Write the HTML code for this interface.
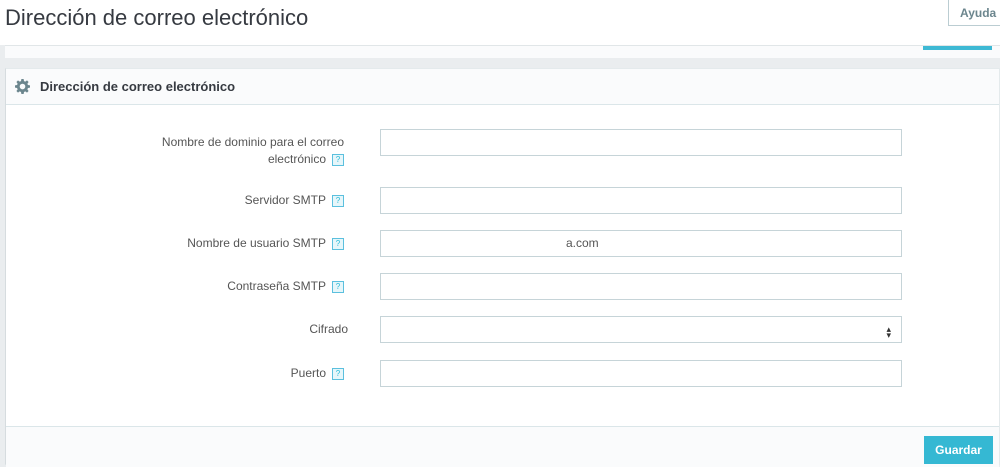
<!DOCTYPE html>
<html><head><meta charset="utf-8"><style>
body{margin:0;width:1000px;height:465px;overflow:hidden;background:#eaedef;font-family:"Liberation Sans",sans-serif;position:relative;color:#555}
.top{position:absolute;left:0;top:0;width:1000px;height:45px;background:#fff}
.title{position:absolute;left:5px;top:5px;font-size:22px;color:#363a41}
.help{position:absolute;left:948px;top:-2px;width:60px;height:28px;border:1px solid #bbcdd2;box-sizing:border-box;background:#fff;font-size:12px;color:#6c868e;line-height:28px;padding-left:11px;font-weight:bold}
.prev{position:absolute;left:5px;top:45px;width:995px;height:13px;background:#fafbfc;border-top:1px solid #e1e6e8;box-sizing:border-box}
.bar{position:absolute;left:923px;top:46px;width:69px;height:4px;background:#3eb9d4}
.panel{position:absolute;left:5px;top:68px;width:995px;height:397px;background:#fff;border:1px solid #e4eaec;border-left-color:#d6dcdf;box-sizing:border-box}
.ph{height:35px;background:#fafbfc;border-bottom:1px solid #dbe6e9;font-size:13px;font-weight:bold;color:#363a41;line-height:36px;padding-left:34px;position:relative}
.gear{position:absolute;left:9px;top:10px}
.foot{position:absolute;left:0;top:357px;width:993px;height:40px;background:#fafbfc;border-top:1px solid #dbe6e9}
.btn{position:absolute;left:918px;top:9px;width:69px;height:28px;background:#35b8d3;color:#fff;font-size:12px;font-weight:bold;text-align:center;line-height:28px}
.lbl{position:absolute;right:656px;font-size:12px;color:#555;text-align:right;line-height:17px}
.q{display:inline-block;width:10px;height:10px;border:1px solid #5bc0de;background:#e6f6fa;color:#25b9d7;font-size:8px;line-height:10px;text-align:center;margin-left:6px;vertical-align:middle}
.in{position:absolute;left:380px;width:522px;height:27px;border:1px solid #c6d4d8;box-sizing:border-box;background:#fff;font-size:12px;color:#555;line-height:25px;padding-left:10px}
</style></head><body>
<div class="top"></div>
<div class="title">Dirección de correo electrónico</div>
<div class="help">Ayuda</div>
<div class="prev"></div><div class="bar"></div>
<div class="panel">
<div class="ph"><svg class="gear" width="15" height="15" viewBox="0 0 16 16"><path fill="#6c868e" d="M6.8 0h2.4l.4 2.2 1.4.6 1.8-1.3 1.7 1.7-1.3 1.8.6 1.4 2.2.4v2.4l-2.2.4-.6 1.4 1.3 1.8-1.7 1.7-1.8-1.3-1.4.6-.4 2.2H6.8l-.4-2.2-1.4-.6-1.8 1.3-1.7-1.7 1.3-1.8-.6-1.4L0 9.2V6.8l2.2-.4.6-1.4-1.3-1.8 1.7-1.7 1.8 1.3 1.4-.6zM8 5a3 3 0 100 6 3 3 0 000-6z"/></svg>Dirección de correo electrónico</div>
<div class="foot"><div class="btn">Guardar</div></div>
</div>
<div class="lbl" style="top:134px">Nombre de dominio para el correo<br>electrónico<span class="q">?</span></div>
<div class="in" style="top:129px"></div>
<div class="lbl" style="top:192px">Servidor SMTP<span class="q">?</span></div>
<div class="in" style="top:187px"></div>
<div class="lbl" style="top:235px">Nombre de usuario SMTP<span class="q">?</span></div>
<div class="in" style="top:230px"><span style="padding-left:175px">a.com</span></div>
<div class="lbl" style="top:278px">Contraseña SMTP<span class="q">?</span></div>
<div class="in" style="top:273px"></div>
<div class="lbl" style="top:321px;right:652px">Cifrado</div>
<div class="in" style="top:316px"><span style="position:absolute;right:10px;top:0;font-size:9px;color:#333">&#x25B4;<br></span><span style="position:absolute;right:10px;top:6px;font-size:9px;color:#333">&#x25BE;</span></div>
<div class="lbl" style="top:365px">Puerto<span class="q">?</span></div>
<div class="in" style="top:360px"></div>
</body></html>
